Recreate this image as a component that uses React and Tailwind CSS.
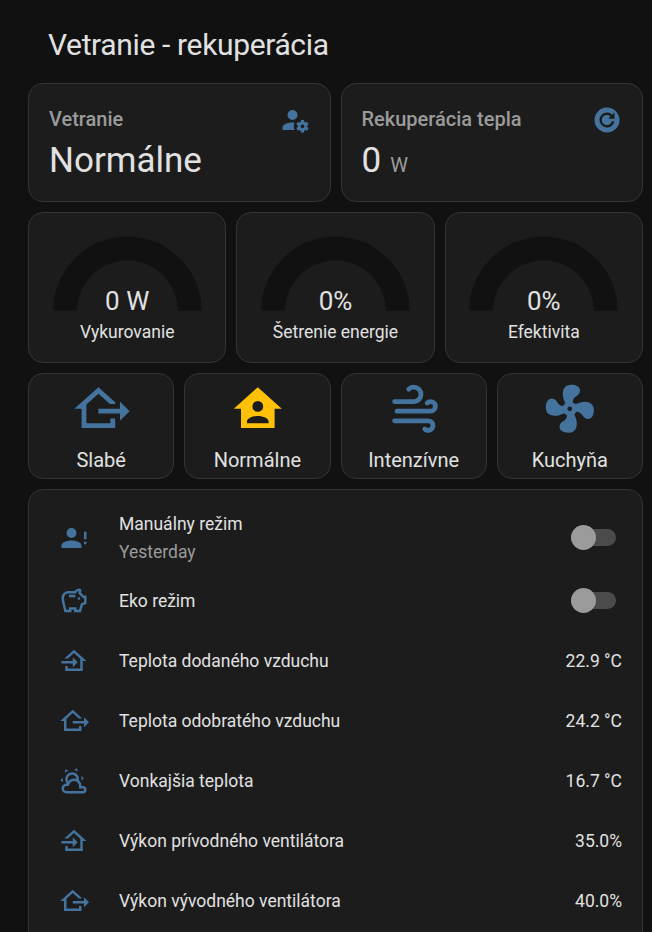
import React from "react";

const ICONS = {
  accountCog:
    "M10 4A4 4 0 0 0 6 8A4 4 0 0 0 10 12A4 4 0 0 0 14 8A4 4 0 0 0 10 4M17 12C16.87 12 16.76 12.09 16.74 12.21L16.55 13.53C16.25 13.66 15.96 13.82 15.7 14L14.46 13.5C14.35 13.5 14.22 13.5 14.15 13.63L13.15 15.36C13.09 15.47 13.11 15.6 13.21 15.68L14.27 16.5C14.25 16.67 14.24 16.83 14.24 17C14.24 17.17 14.25 17.33 14.27 17.5L13.21 18.32C13.12 18.4 13.09 18.53 13.15 18.64L14.15 20.37C14.21 20.5 14.34 20.5 14.46 20.5L15.7 20C15.96 20.18 16.24 20.35 16.55 20.47L16.74 21.79C16.76 21.91 16.86 22 17 22H19C19.11 22 19.22 21.91 19.24 21.79L19.43 20.47C19.73 20.34 20 20.18 20.27 20L21.5 20.5C21.63 20.5 21.76 20.5 21.83 20.37L22.83 18.64C22.89 18.53 22.86 18.4 22.77 18.32L21.7 17.5C21.72 17.33 21.74 17.17 21.74 17C21.74 16.83 21.73 16.67 21.7 16.5L22.76 15.68C22.85 15.6 22.88 15.47 22.82 15.36L21.82 13.63C21.76 13.5 21.63 13.5 21.5 13.5L20.27 14C20 13.82 19.73 13.65 19.42 13.53L19.23 12.21C19.22 12.09 19.11 12 19 12H17M10 14C5.58 14 2 15.79 2 18V20H11.68A7 7 0 0 1 11 17A7 7 0 0 1 11.64 14.09C11.11 14.03 10.56 14 10 14M18 15.5C18.83 15.5 19.5 16.17 19.5 17C19.5 17.83 18.83 18.5 18 18.5C17.16 18.5 16.5 17.83 16.5 17C16.5 16.17 17.17 15.5 18 15.5Z",
  refreshCircle:
    "M12 2A10 10 0 1 0 22 12A10 10 0 0 0 12 2M18 11H13L14.81 9.19A3.94 3.94 0 0 0 12 8A4 4 0 1 0 15.86 13H17.91A6 6 0 1 1 12 6A5.91 5.91 0 0 1 16.22 7.78L18 6Z",
  homeExport:
    "M24 13L20 17V14H11V12H20V9L24 13M4 20V12H1L11 3L18 9.3V10H15.79L11 5.69L6 10.19V18H16V16H18V20H4Z",
  homeImport:
    "M15 13L11 17V14H2V12H11V9L15 13M5 20V16H7V18H17V10.19L12 5.69L7.21 10H4.22L12 3L22 12H19V20H5Z",
  homeAccount:
    "M12,3L2,12H5V20H19V12H22L12,3M12,8.75A2.25,2.25 0 0,1 14.25,11A2.25,2.25 0 0,1 12,13.25A2.25,2.25 0 0,1 9.75,11A2.25,2.25 0 0,1 12,8.75M12,15C13.5,15 16.5,15.75 16.5,17.25V18H7.5V17.25C7.5,15.75 10.5,15 12,15Z",
  windy:
    "M4,10A1,1 0 0,1 3,9A1,1 0 0,1 4,8H12A2,2 0 0,0 14,6A2,2 0 0,0 12,4C11.45,4 10.95,4.22 10.59,4.59C10.2,5 9.56,5 9.17,4.59C8.78,4.2 8.78,3.56 9.17,3.17C9.9,2.45 10.9,2 12,2A4,4 0 0,1 16,6A4,4 0 0,1 12,10H4M19,12A1,1 0 0,0 20,11A1,1 0 0,0 19,10C18.72,10 18.47,10.11 18.29,10.29C17.9,10.68 17.27,10.68 16.88,10.29C16.5,9.9 16.5,9.27 16.88,8.88C17.42,8.34 18.17,8 19,8A3,3 0 0,1 22,11A3,3 0 0,1 19,14H5A1,1 0 0,1 4,13A1,1 0 0,1 5,12H19M18,18H4A1,1 0 0,1 3,17A1,1 0 0,1 4,16H18A3,3 0 0,1 21,19A3,3 0 0,1 18,22C17.17,22 16.42,21.66 15.88,21.12C15.5,20.73 15.5,20.1 15.88,19.71C16.27,19.32 16.9,19.32 17.29,19.71C17.47,19.89 17.72,20 18,20A1,1 0 0,0 19,19A1,1 0 0,0 18,18Z",
  fan: "M12,11A1,1 0 0,0 11,12A1,1 0 0,0 12,13A1,1 0 0,0 13,12A1,1 0 0,0 12,11M12.5,2C17,2 17.11,5.57 14.75,6.75C13.76,7.24 13.32,8.29 13.13,9.22C13.61,9.42 14.03,9.73 14.35,10.13C18.05,8.13 22.03,8.92 22.03,12.5C22.03,17 18.46,17.1 17.28,14.73C16.78,13.74 15.72,13.3 14.79,13.11C14.59,13.59 14.28,14 13.88,14.34C15.87,18.03 15.08,22 11.5,22C7,22 6.91,18.42 9.27,17.24C10.25,16.75 10.69,15.71 10.89,14.79C10.4,14.59 9.97,14.27 9.65,13.87C5.96,15.85 2,15.07 2,11.5C2,7 5.56,6.89 6.74,9.26C7.24,10.25 8.29,10.68 9.22,10.87C9.41,10.39 9.73,9.97 10.14,9.65C8.15,5.96 8.94,2 12.5,2Z",
  accountAlert:
    "M10 4A4 4 0 0 1 14 8A4 4 0 0 1 10 12A4 4 0 0 1 6 8A4 4 0 0 1 10 4M10 14C14.42 14 18 15.79 18 18V20H2V18C2 15.79 5.58 14 10 14M20 13V7H22V13H20M20 17V15H22V17H20Z",
  piggyBank:
    "M15 10C15 9.45 15.45 9 16 9C16.55 9 17 9.45 17 10S16.55 11 16 11 15 10.55 15 10M8 9H13V7H8V9M22 7.5V14.47L19.18 15.41L17.5 21H12V19H10V21H4.5C4.5 21 2 12.54 2 9.5S4.46 4 7.5 4H12.5C13.41 2.79 14.86 2 16.5 2C17.33 2 18 2.67 18 3.5C18 3.71 17.96 3.9 17.88 4.08C17.74 4.42 17.62 4.81 17.56 5.23L19.83 7.5H22M20 9.5H19L15.5 6C15.5 5.35 15.59 4.71 15.76 4.09C14.79 4.34 14 5.06 13.67 6H7.5C5.57 6 4 7.57 4 9.5C4 11.38 5.22 16.15 6 19H8V17H14V19H16L17.56 13.85L20 13.03V9.5Z",
  partlyCloudy:
    "M12.74,5.47C15.1,6.5 16.35,9.03 15.92,11.46C17.19,12.56 18,14.19 18,16V16.17C18.31,16.06 18.65,16 19,16A3,3 0 0,1 22,19A3,3 0 0,1 19,22H6A4,4 0 0,1 2,18A4,4 0 0,1 6,14H6.27C5,12.45 4.6,10.24 5.5,8.26C6.72,5.5 9.97,4.24 12.74,5.47M11.93,7.3C10.16,6.5 8.09,7.31 7.31,9.07C6.85,10.09 6.93,11.22 7.41,12.13C8.5,10.83 10.16,10 12,10C12.7,10 13.38,10.12 14,10.34C13.94,9.06 13.18,7.86 11.93,7.3M13.55,3.64C13,3.4 12.45,3.23 11.88,3.12L14.37,1.82L15.27,4.71C14.76,4.29 14.19,3.93 13.55,3.64M6.09,4.44C5.6,4.79 5.17,5.19 4.8,5.63L4.91,2.82L7.87,3.5C7.25,3.71 6.65,4.03 6.09,4.44M18,9.71C17.91,9.12 17.78,8.55 17.59,8L19.97,9.5L17.92,11.73C18.03,11.08 18.05,10.4 18,9.71M3.04,11.3C3.11,11.9 3.24,12.47 3.43,13L1.06,11.5L3.1,9.28C3,9.93 2.97,10.61 3.04,11.3M19,18H16V16A4,4 0 0,0 12,12A4,4 0 0,0 8,16H6A2,2 0 0,0 4,18A2,2 0 0,0 6,20H19A1,1 0 0,0 20,19A1,1 0 0,0 19,18Z",
};

function Icon({ name, className }) {
  return (
    <svg viewBox="0 0 24 24" fill="currentColor" className={`shrink-0 ${className}`} aria-hidden="true">
      <path d={ICONS[name]} />
    </svg>
  );
}

function Card({ className, children }) {
  return (
    <div className={`rounded-[15px] border border-[#343434] bg-[#1c1c1c] ${className}`}>{children}</div>
  );
}

function StateCard({ title, value, unit, icon }) {
  return (
    <Card className="flex h-[119px] flex-col px-5 pt-5">
      <div className="flex h-[31px] items-start justify-between">
        <span className="text-[20px] leading-[30px] font-medium text-[#9b9b9b]">{title}</span>
        <Icon name={icon} className="mt-px size-[30px] text-[#44739e]" />
      </div>
      <div className="mt-[5px] flex items-baseline gap-[9px] leading-[42px]">
        <span className="text-[35px]">{value}</span>
        {unit && <span className="text-[20px] text-[#9b9b9b]">{unit}</span>}
      </div>
    </Card>
  );
}

function GaugeCard({ value, label }) {
  return (
    <Card className="flex h-[151px] flex-col items-center pt-[23px]">
      <div className="grid h-[76px] w-[149px]">
        <svg viewBox="-50 -50 100 50" className="col-start-1 row-start-1 h-[75px] w-[149px]">
          <path d="M-41.7 0A41.7 41.7 0 0 1 41.7 0" fill="none" stroke="#111111" strokeWidth="16" />
        </svg>
        <span className="col-start-1 row-start-1 self-end text-center text-[26px] leading-[22px]">
          {value}
        </span>
      </div>
      <span className="mt-[7px] text-[17.5px] leading-[26px]">{label}</span>
    </Card>
  );
}

function ButtonCard({ icon, label, active }) {
  return (
    <Card className="flex h-[106px] flex-col items-center pt-[6px]">
      <Icon name={icon} className={`size-[57.6px] ${active ? "text-[#ffc107]" : "text-[#44739e]"}`} />
      <span className="mt-[8.4px] text-[20px] leading-[28px]">{label}</span>
    </Card>
  );
}

function Toggle() {
  return (
    <div className="mr-[6px] mb-[2px] grid w-[45px] items-center">
      <div className="col-start-1 row-start-1 h-[17px] rounded-full bg-[#4b4b4b]" />
      <div className="col-start-1 row-start-1 size-[25px] rounded-full bg-[#9b9b9b]" />
    </div>
  );
}

const ROWS = [
  { icon: "homeImport", label: "Teplota dodaného vzduchu", value: "22.9 °C" },
  { icon: "homeExport", label: "Teplota odobratého vzduchu", value: "24.2 °C" },
  { icon: "partlyCloudy", label: "Vonkajšia teplota", value: "16.7 °C" },
  { icon: "homeImport", label: "Výkon prívodného ventilátora", value: "35.0%" },
  { icon: "homeExport", label: "Výkon vývodného ventilátora", value: "40.0%" },
];

function EntityRow({ icon, label, secondary, children }) {
  return (
    <div className={`flex items-center leading-[28px] ${secondary ? "h-[56px]" : "h-[50px]"}`}>
      <Icon name={icon} className="ml-[10px] size-[30px] text-[#44739e]" />
      <div className="ml-[30px] flex-1">
        <div>{label}</div>
        {secondary && <div className="text-[#9b9b9b]">{secondary}</div>}
      </div>
      {children}
    </div>
  );
}

export default function App() {
  return (
    <main className="h-[932px] w-[652px] overflow-hidden bg-[#111111] pr-[9px] pl-7 font-[Roboto,sans-serif] text-[#e1e1e1]">
      <h1 className="flex h-[83px] items-start pt-[25px] pl-5 text-[30px] leading-[40px] tracking-[-0.36px]">
        Vetranie - rekuperácia
      </h1>
      <div className="flex flex-col gap-[10px]">
        <div className="grid grid-cols-2 gap-[10px]">
          <StateCard title="Vetranie" value="Normálne" icon="accountCog" />
          <StateCard title="Rekuperácia tepla" value="0" unit="W" icon="refreshCircle" />
        </div>
        <div className="grid grid-cols-3 gap-[10px]">
          <GaugeCard value="0 W" label="Vykurovanie" />
          <GaugeCard value="0%" label="Šetrenie energie" />
          <GaugeCard value="0%" label="Efektivita" />
        </div>
        <div className="grid grid-cols-4 gap-[10px]">
          <ButtonCard icon="homeExport" label="Slabé" />
          <ButtonCard icon="homeAccount" label="Normálne" active />
          <ButtonCard icon="windy" label="Intenzívne" />
          <ButtonCard icon="fan" label="Kuchyňa" />
        </div>
        <Card className="flex h-[480px] flex-col gap-[10px] p-5 text-[17.5px]">
          <EntityRow icon="accountAlert" label="Manuálny režim" secondary="Yesterday">
            <Toggle />
          </EntityRow>
          <EntityRow icon="piggyBank" label="Eko režim">
            <Toggle />
          </EntityRow>
          {ROWS.map((row) => (
            <EntityRow key={row.label} icon={row.icon} label={row.label}>
              <span>{row.value}</span>
            </EntityRow>
          ))}
        </Card>
      </div>
    </main>
  );
}
